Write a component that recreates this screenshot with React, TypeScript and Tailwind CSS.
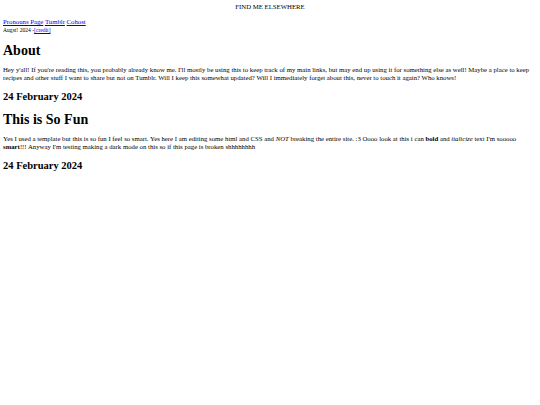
export default function App() {
  const link = "text-[#0000ee] underline";
  return (
    <div className="min-h-[405px] bg-white px-[3px] py-[3px] text-[6.75px] leading-[8px] text-black [font-family:'Liberation_Serif',serif]">
      <div className="text-center">FIND ME ELSEWHERE</div>
      <p className="my-[7px]">
        <a className={link}>Pronouns Page</a> <a className={link}>Tumblr</a>{" "}
        <a className={link}>Cohost</a>
        <br />
        <span className="text-[5.6px]">
          Augst! 2024 -<a className={link}>[credit]</a>
        </span>
      </p>
      <h1 className="mt-[9.4px] mb-[7px] text-[14px] font-bold leading-[16px]">About</h1>
      <p className="my-[7px]">
        Hey y'all! If you're reading this, you probably already know me. I'll mostly be using this to keep track of my main
        links, but may end up using it for something else as well! Maybe a place to keep recipes and other stuff I want to
        share but not on Tumblr. Will I keep this somewhat updated? Will I immediately forget about this, never to touch it
        again? Who knows!
      </p>
      <h2 className="my-[8.7px] text-[10.5px] font-bold leading-[12px]">24 February 2024</h2>
      <h1 className="mt-[9.4px] mb-[7px] text-[14px] font-bold leading-[16px]">This is So Fun</h1>
      <p className="my-[7px]">
        Yes I used a template but this is so fun I feel so smart. Yes here I am editing some html and CSS and <i>NOT</i>{" "}
        breaking the entire site. :3 Oooo look at this i can <b>bold</b> and <i>italicize</i> text I'm sooooo{" "}
        <b>smart</b>!!! Anyway I'm testing making a dark mode on this so if this page is broken shhhhhhhh
      </p>
      <h2 className="my-[8.7px] text-[10.5px] font-bold leading-[12px]">24 February 2024</h2>
    </div>
  );
}
